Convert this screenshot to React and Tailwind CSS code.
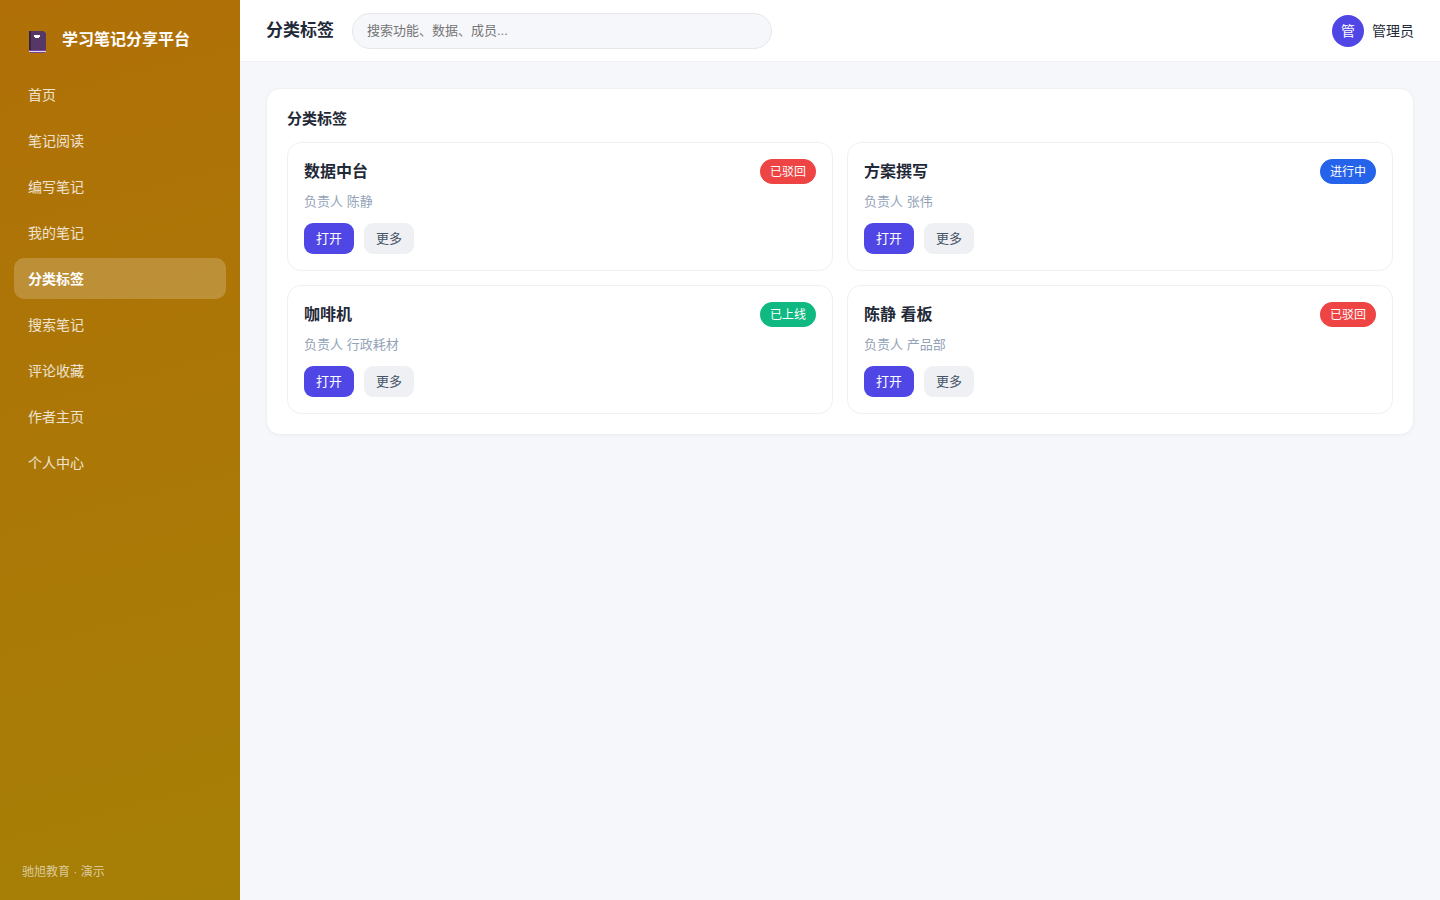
import React, { useState } from 'react';
import clsx from 'clsx';

const NAV_ITEMS = ['首页', '笔记阅读', '编写笔记', '我的笔记', '分类标签', '搜索笔记', '评论收藏', '作者主页', '个人中心'];

const STATUS_STYLES = {
  已驳回: 'bg-[#ef4444]',
  进行中: 'bg-[#2563eb]',
  已上线: 'bg-[#10b981]',
};

const CARDS = [
  { id: 1, title: '数据中台', owner: '陈静', status: '已驳回' },
  { id: 2, title: '方案撰写', owner: '张伟', status: '进行中' },
  { id: 3, title: '咖啡机', owner: '行政耗材', status: '已上线' },
  { id: 4, title: '陈静 看板', owner: '产品部', status: '已驳回' },
];

function BookLogo() {
  return (
    <svg width="17" height="24" viewBox="0 0 17 24" shapeRendering="crispEdges" aria-hidden="true">
      <path d="M0 2h15v1h1v1h1v19h-1v1H1v-1H0z" fill="#553866" />
      <path d="M0 2h2v19H0z" fill="#372146" />
      <path d="M0 21h17v2h-1v1H1v-1H0z" fill="#72479b" />
      <path d="M0 22h17v1H0z" fill="#e3d5ec" />
      <path d="M5 6h6v2h-1v1H6V8H5z" fill="#fff" />
    </svg>
  );
}

function Sidebar({ active, onSelect }) {
  return (
    <aside className="w-60 shrink-0 flex flex-col px-3.5 py-5 text-white bg-[linear-gradient(165deg,#b07007,#a67f06)]">
      <div className="flex items-center gap-4 h-[42px] pl-[15px] mb-3">
        <BookLogo />
        <span className="text-base leading-6 pb-0.5 font-bold">学习笔记分享平台</span>
      </div>
      <nav className="flex flex-col gap-[5px]">
        {NAV_ITEMS.map((item) => (
          <a
            key={item}
            href="#"
            onClick={(e) => { e.preventDefault(); onSelect(item); }}
            className={clsx(
              'px-3.5 h-[41px] flex items-center rounded-[10px] text-sm',
              item === active ? 'bg-white/20 text-white font-bold' : 'text-white/80 hover:bg-white/10'
            )}
          >
            {item}
          </a>
        ))}
      </nav>
      <p className="mt-auto px-2 text-xs text-white/60">驰旭教育 · 演示</p>
    </aside>
  );
}

function TopBar({ title }) {
  return (
    <header className="flex items-center gap-[18px] h-[62px] px-[26px] bg-white border-b border-[#eef0f4]">
      <h1 className="text-[17px] font-bold">{title}</h1>
      <input
        type="search"
        aria-label="搜索"
        placeholder="搜索功能、数据、成员..."
        className="w-full max-w-[420px] h-9 px-3.5 text-[13px] rounded-full bg-[#f5f7fb] border border-[#e5e7eb] placeholder:text-[#757575] outline-none"
      />
      <div className="ml-auto shrink-0 flex items-center gap-2 text-sm">
        <span className="w-8 h-8 rounded-full bg-[#4f46e5] text-white flex items-center justify-center">管</span>
        <span>管理员</span>
      </div>
    </header>
  );
}

function TagCard({ card }) {
  return (
    <article className="p-4 bg-white border border-[#eef0f4] rounded-[14px]">
      <div className="flex items-center justify-between">
        <h3 className="text-base leading-6 font-bold">{card.title}</h3>
        <span className={clsx('h-[25px] px-2.5 flex items-center rounded-full text-xs text-white', STATUS_STYLES[card.status])}>
          {card.status}
        </span>
      </div>
      <p className="mt-2 text-[13px] leading-5 text-[#94a3b8]">负责人 {card.owner}</p>
      <div className="flex gap-2.5 mt-[11px]">
        <button type="button" className="h-[31px] px-3 rounded-[9px] text-[13px] bg-[#4f46e5] text-white hover:opacity-90">打开</button>
        <button type="button" className="h-[31px] px-3 rounded-[9px] text-[13px] bg-[#eef0f4] text-[#475569] hover:opacity-90">更多</button>
      </div>
    </article>
  );
}

export default function App() {
  const [active, setActive] = useState('分类标签');

  return (
    <div className="min-h-screen flex bg-[#f5f7fb] text-[#1f2937] font-['Liberation_Sans','Noto_Sans_CJK_SC',sans-serif]">
      <Sidebar active={active} onSelect={setActive} />
      <div className="flex-1 min-w-0">
        <TopBar title={active} />
        <main className="p-[26px]">
          <section className="p-5 bg-white border border-[#eef0f4] rounded-[14px] shadow-[0_1px_3px_rgba(0,0,0,0.04)]">
            <h2 className="mb-3.5 text-[15px] leading-[19px] font-bold">{active}</h2>
            <div className="grid grid-cols-2 gap-3.5">
              {CARDS.map((card) => (
                <TagCard key={card.id} card={card} />
              ))}
            </div>
          </section>
        </main>
      </div>
    </div>
  );
}
